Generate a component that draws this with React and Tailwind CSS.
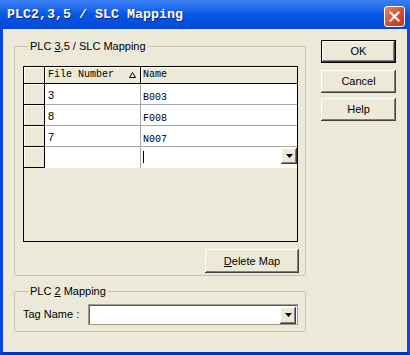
import React from "react";

// classic 3D raised look used by the dialog buttons
const raised =
  "bg-[#ece9d8] shadow-[inset_-1px_-1px_#404040,inset_1px_1px_#ffffff,inset_-2px_-2px_#808080]";

function DropArrow() {
  return (
    <svg width="7" height="4" viewBox="0 0 7 4">
      <path d="M0 0h7L3.5 4z" fill="#000" />
    </svg>
  );
}

function DropButton({ className = "" }) {
  return (
    <div className={`w-[16px] h-[16px] flex items-center justify-center ${raised} ${className}`}>
      <DropArrow />
    </div>
  );
}

function DialogButton({ children, isDefault = false, className = "" }) {
  return (
    <button
      className={`flex items-center justify-center text-[11px] leading-[13px] text-black ${raised} ${
        isDefault ? "border border-black" : ""
      } ${className}`}
    >
      {children}
    </button>
  );
}

const rows = [
  { num: "3", name: "B003" },
  { num: "8", name: "F008" },
  { num: "7", name: "N007" },
];

export default function App() {
  return (
    <div
      className="w-[410px] h-[355px] flex flex-col select-none"
      style={{ fontFamily: '"Liberation Sans", Arial, sans-serif' }}
    >
      {/* Title bar */}
      <div className="h-[29px] shrink-0 flex items-center justify-between pl-[7px] pr-[5px] bg-gradient-to-b from-[#3a80f3] via-[#0558e6] to-[#0347d4]">
        <span
          className="text-white font-bold text-[13.33px] leading-[16px] mt-[1px] [text-shadow:1px_1px_#0a2a8a]"
          style={{ fontFamily: '"Liberation Mono", "Courier New", monospace' }}
        >
          PLC2,3,5 / SLC Mapping
        </span>
        <div className="w-[21px] h-[21px] mt-[3px] rounded-[3px] border border-white bg-gradient-to-br from-[#e8866a] via-[#d6512f] to-[#b8381b] flex items-center justify-center">
          <svg width="11" height="11" viewBox="0 0 11 11">
            <path d="M1.5 1.5l8 8M9.5 1.5l-8 8" stroke="#fff" strokeWidth="2.2" strokeLinecap="square" />
          </svg>
        </div>
      </div>

      {/* Body */}
      <div className="flex-1 flex bg-[#ece9d8] border-x-[3px] border-b-[3px] border-x-[#0b47dc] border-b-[#0636b5] pl-[11px]">
        <div className="w-[292px] flex flex-col">
          {/* PLC 3,5 / SLC group */}
          <fieldset className="mt-[11px] border border-[#c5c2ad] rounded-[2px] pl-[8px] pr-[6px] pt-[13px] pb-[2px] flex flex-col">
            <legend className="ml-[5px] px-[2px] text-[11px] leading-[13px] text-black">
              PLC <span className="underline">3</span>,5 / SLC Mapping
            </legend>

            {/* Grid */}
            <div className="w-[275px] h-[176px] border border-black flex flex-col bg-[#ece9d8]">
              {/* Header */}
              <div
                className="flex h-[17px] text-[10px] leading-[12px] text-black"
                style={{ fontFamily: '"Liberation Mono", "Courier New", monospace' }}
              >
                <div className="w-[21px] border-r border-b border-black shadow-[inset_1px_1px_#ffffff]" />
                <div className="w-[96px] border-r border-b border-black shadow-[inset_1px_1px_#ffffff] flex items-center justify-between pl-[3px] pr-[4px]">
                  <span>File Number</span>
                  <svg width="7" height="6" viewBox="0 0 7 6">
                    <path d="M3.5 0.5L6.5 5.5H0.5Z" fill="none" stroke="#000" strokeWidth="1" />
                  </svg>
                </div>
                <div className="flex-1 border-b border-black shadow-[inset_1px_1px_#ffffff] flex items-center pl-[2px]">
                  Name
                </div>
              </div>

              {/* Data rows */}
              {rows.map((r) => (
                <div key={r.num} className="flex h-[21px]">
                  <div className="w-[21px] border-r border-b border-black shadow-[inset_1px_1px_#ffffff]" />
                  <div className="w-[96px] bg-white border-r border-b border-[#a8a8a8] pl-[3px] pt-[5px] text-[11px] leading-[13px] text-black">
                    {r.num}
                  </div>
                  <div
                    className="flex-1 bg-white border-b border-[#a8a8a8] pl-[2px] pt-[8px] text-[10px] leading-[12px] text-black"
                    style={{ fontFamily: '"Liberation Mono", "Courier New", monospace' }}
                  >
                    {r.name}
                  </div>
                </div>
              ))}

              {/* New row */}
              <div className="flex h-[21px]">
                <div className="w-[21px] border-r border-b border-black shadow-[inset_1px_1px_#ffffff]" />
                <div className="w-[96px] bg-white border-r border-[#a8a8a8]" />
                <div className="flex-1 bg-white flex items-start justify-between pl-[2px]">
                  <div className="w-[1px] h-[12px] bg-black mt-[4px]" />
                  <DropButton className="mt-[1px]" />
                </div>
              </div>
            </div>

            <DialogButton className="self-end w-[94px] h-[24px] mt-[7px]">
              <span>
                <span className="underline">D</span>elete Map
              </span>
            </DialogButton>
          </fieldset>

          {/* PLC 2 group */}
          <fieldset className="mt-[9px] border border-[#c5c2ad] rounded-[2px] pl-[8px] pr-[7px] pt-[6px] pb-[6px] flex items-center">
            <legend className="ml-[5px] px-[2px] text-[11px] leading-[13px] text-black">
              PLC <span className="underline">2</span> Mapping
            </legend>
            <span className="text-[11px] leading-[13px] text-black w-[65px]">Tag Name :</span>
            <div className="flex-1 h-[21px] bg-white border border-[#9d9a88] shadow-[inset_1px_1px_#5e5c50] flex items-center justify-end pr-[1px]">
              <DropButton className="h-[17px] mt-[1px]" />
            </div>
          </fieldset>
        </div>

        {/* Buttons */}
        <div className="ml-[15px] w-[75px] flex flex-col mt-[11px]">
          <DialogButton isDefault className="h-[23px]">OK</DialogButton>
          <DialogButton className="h-[23px] mt-[7px]">Cancel</DialogButton>
          <DialogButton className="h-[23px] mt-[5px]">Help</DialogButton>
        </div>
      </div>
    </div>
  );
}
